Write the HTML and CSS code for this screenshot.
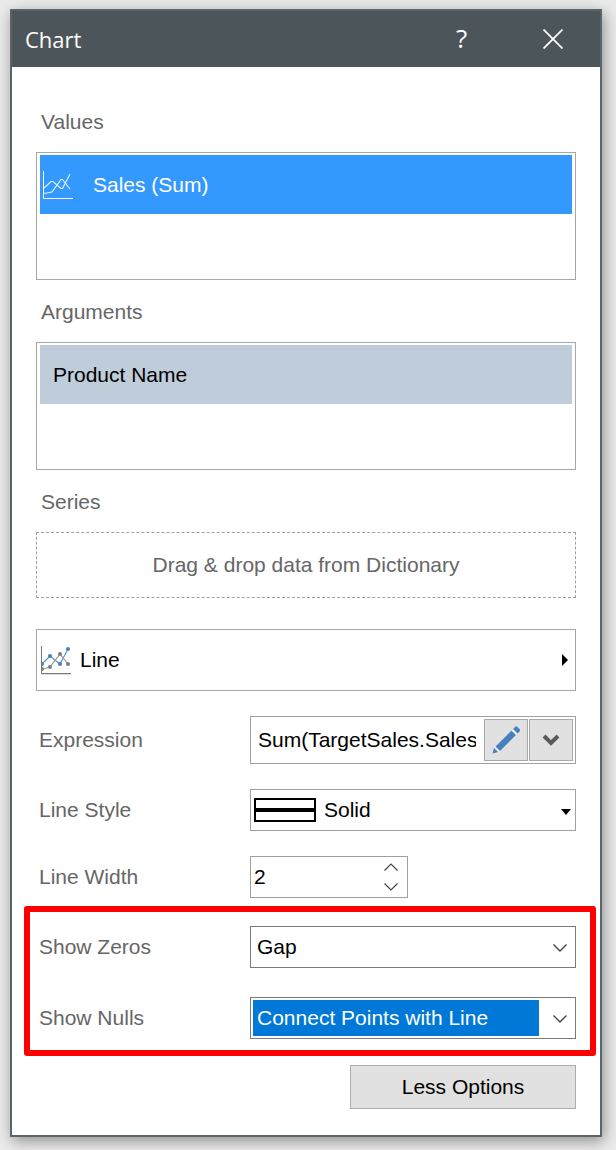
FILE: index.html
```html
<!DOCTYPE html>
<html lang="en">
<head>
<meta charset="utf-8">
<meta name="viewport" content="width=device-width, initial-scale=1">
<title>Chart</title>
<link rel="stylesheet" href="styles.css">
</head>
<body>
<main class="window">
  <header class="titlebar">
    <h1 class="title">Chart</h1>
    <button class="title-button title-help" type="button" aria-label="Help">?</button>
    <button class="title-button" type="button" aria-label="Close">
      <svg width="20" height="20" viewBox="0 0 20 20" fill="none" stroke="#fff" stroke-width="1.8"><path d="M.5 .5l19 19M19.500 .5l-19 19"/></svg>
    </button>
  </header>
  <form class="content">
    <h2 class="section-label">Values</h2>
    <div class="list">
      <button class="item item-active" type="button">
        <svg class="item-icon" width="31" height="30" viewBox="0 0 31 30" fill="none" stroke="#fff"><path d="M1.500 1v27.500H31"/><path stroke-width="1.200" stroke-opacity=".85" d="M2 18l7-6.500h2l8 7h1.500L28 4M2 23.500l8-1.500 9-12.500h1.500L28 19"/></svg>
        <span>Sales (Sum)</span>
      </button>
    </div>
    <h2 class="section-label">Arguments</h2>
    <div class="list">
      <button class="item item-muted" type="button">Product Name</button>
    </div>
    <h2 class="section-label">Series</h2>
    <div class="dropzone">Drag &amp; drop data from Dictionary</div>

    <button class="type-button" type="button">
      <svg width="32" height="31" viewBox="0 0 32 31" fill="none"><path stroke="#ddd" d="M1 29.500h29"/><path stroke="#777" d="M1.500 1v27.500H31"/><path stroke="#5d92c9" stroke-width="1.200" d="M2 19l8-8 10 8 8-15"/><path stroke="#999" stroke-width="1.200" d="M2 24.500l8-2.500 10-13 8 10"/><g fill="#4a80bd"><path d="M2 17a2 2 0 0 1 0 4z"/><circle cx="10" cy="11" r="2.100"/><circle cx="20" cy="19" r="2.100"/><circle cx="28" cy="4" r="2.100"/></g><g fill="#808080"><path d="M2 22a2 2 0 0 1 0 4z"/><circle cx="10" cy="22" r="2.100"/><circle cx="20" cy="9" r="2.100"/><circle cx="28" cy="19" r="2.100"/></g></svg>
      <span class="type-name">Line</span>
      <svg width="6" height="12" viewBox="0 0 6 12"><path d="M0 0l6 6-6 6z"/></svg>
    </button>

    <div class="row row-expression">
      <label for="expression">Expression</label>
      <div class="field field-expression">
        <input class="text-input" id="expression" type="text" value="Sum(TargetSales.Sales)">
        <button class="tool-button" type="button" aria-label="Edit expression">
          <svg width="30" height="30" viewBox="0 0 30 30"><path fill="#f4f7fa" d="M4 22L22 4l5 4L8 27z"/><path fill="#4a80bd" d="M1.500 28.500L3 23l4 4zM4.500 21.500L20.500 5.500l4.500 4.500L9 26zM22 4l2.500-2.500h1.500l3 3V6L26.500 8.500z"/></svg>
        </button>
        <button class="tool-button" type="button" aria-label="More">
          <svg width="18" height="12" viewBox="0 0 18 12" fill="none" stroke="#5a5a5a" stroke-width="4"><path d="M2 2l7 7 7-7"/></svg>
        </button>
      </div>
    </div>
    <div class="row row-style">
      <label for="line-style">Line Style</label>
      <div class="field">
        <svg class="swatch" width="62" height="24" viewBox="0 0 62 24"><path fill="none" stroke="#000" stroke-width="2" d="M1 1h60v22H1z"/><path d="M0 10h62v4H0z"/></svg>
        <select class="select select-style" id="line-style"><option>Solid</option></select>
        <svg class="arrow arrow-small" width="10" height="6" viewBox="0 0 10 6"><path d="M0 0h10L5 6z"/></svg>
      </div>
    </div>
    <div class="row row-width">
      <label for="line-width">Line Width</label>
      <div class="field field-number">
        <input class="number-input" id="line-width" type="number" value="2">
        <div class="spinner">
          <button type="button" aria-label="Increase"><svg width="14" height="8" viewBox="0 0 14 8" fill="none" stroke="#444" stroke-width="1.200"><path d="M.5 7.500L7 1l6.500 6.500"/></svg></button>
          <button type="button" aria-label="Decrease"><svg width="14" height="8" viewBox="0 0 14 8" fill="none" stroke="#444" stroke-width="1.200"><path d="M.5 .5L7 7l6.500-6.500"/></svg></button>
        </div>
      </div>
    </div>

    <div class="highlight">
      <div class="row">
        <label for="show-zeros">Show Zeros</label>
        <div class="field field-dark">
          <select class="select" id="show-zeros"><option>Gap</option></select>
          <svg class="arrow" width="14" height="8" viewBox="0 0 14 8" fill="none" stroke="#444" stroke-width="1.400"><path d="M.5 .5L7 7l6.500-6.500"/></svg>
        </div>
      </div>
      <div class="row">
        <label for="show-nulls">Show Nulls</label>
        <div class="field field-dark">
          <select class="select select-active" id="show-nulls"><option>Connect Points with Line</option></select>
          <svg class="arrow" width="14" height="8" viewBox="0 0 14 8" fill="none" stroke="#444" stroke-width="1.400"><path d="M.5 .5L7 7l6.500-6.500"/></svg>
        </div>
      </div>
    </div>
    <button class="options-button" type="button">Less Options</button>
  </form>
</main>
</body>
</html>
```
FILE: styles.css
```css
* { box-sizing: border-box; }

body {
  margin: 0;
  padding: 9px 14px 13px 10px;
  background: #ebebeb;
  color: #000;
  font: 21px/30px "Liberation Sans", Arial, sans-serif;
}

button, input, select {
  margin: 0;
  padding: 0;
  border: 0;
  border-radius: 0;
  background: none;
  color: inherit;
  font: inherit;
}

svg { display: block; flex: none; }

.window {
  border: 2px solid #5a646b;
  background: #fff;
  box-shadow: 2px 4px 14px rgba(0, 0, 0, 0.4);
}

.titlebar {
  display: flex;
  align-items: center;
  height: 56px;
  padding: 0 2px 0 13px;
  background: #4c555a;
  color: #fff;
  font-family: "Open Sans", "Noto Sans", sans-serif;
}

.title {
  flex: 1;
  margin: 0;
  font-size: 22px;
  font-weight: 400;
}

.title-button {
  display: flex;
  align-items: center;
  justify-content: center;
  width: 91px;
  height: 54px;
}

.title-help {
  padding-bottom: 3px;
  font-size: 26px;
  font-weight: 500;
}

.content {
  display: flex;
  flex-direction: column;
  padding: 40px 24px 26px;
}

.section-label {
  margin: 0 0 15px;
  padding-left: 5px;
  color: #666;
  font-size: 21px;
  font-weight: 400;
}

.list {
  height: 128px;
  margin-bottom: 17px;
  padding: 2px 3px;
  border: 1px solid #a6a6a6;
}

.item {
  display: flex;
  align-items: center;
  width: 100%;
  height: 59px;
}

.item-active {
  gap: 20px;
  padding-left: 2px;
  background: #3399ff;
  color: #fff;
}

.item-muted {
  padding-left: 13px;
  background: #bfccda;
}

.dropzone {
  display: flex;
  align-items: center;
  justify-content: center;
  height: 66px;
  border: 1px dashed #a0a0a0;
  color: #666;
}

.type-button {
  display: flex;
  align-items: center;
  gap: 8px;
  height: 62px;
  margin: 31px 0 25px;
  padding: 0 7px 0 3px;
  border: 1px solid #a6a6a6;
}

.type-name { flex: 1; text-align: left; }

.row {
  display: grid;
  grid-template-columns: 214px 1fr;
  align-items: center;
}

.row label { padding-left: 3px; color: #666; }

.row-style { margin: 25px 0; }

.row-width { margin-bottom: 8px; }

.field {
  position: relative;
  display: flex;
  align-items: center;
  min-width: 0;
  height: 42px;
  padding: 2px;
  border: 1px solid #a0a0a0;
}

.field-dark { border-color: #7a7a7a; }

.field-expression { height: 48px; gap: 1px; }

.text-input {
  flex: 1;
  min-width: 0;
  height: 30px;
  margin: 0 7px 0 5px;
}

.tool-button {
  display: flex;
  align-items: center;
  justify-content: center;
  width: 44px;
  height: 42px;
  border: 1px solid #a9a9a9;
  background: #e1e1e1;
}

.swatch { margin-left: 1px; }

.select {
  flex: 1;
  min-width: 0;
  height: 36px;
  padding-left: 4px;
  border-right: 34px solid transparent;
  appearance: none;
  background-clip: padding-box;
}

.select-style { padding-left: 8px; }

.select-active { background-color: #0078d7; color: #fff; }

.arrow {
  position: absolute;
  top: 17px;
  right: 8px;
  pointer-events: none;
}

.arrow-small { top: 19px; right: 4px; }

.field-number { width: 158px; padding-left: 3px; }

.number-input {
  flex: 1;
  min-width: 0;
  appearance: textfield;
}

.number-input::-webkit-inner-spin-button { appearance: none; margin: 0; }

.spinner { display: grid; gap: 4px; }

.spinner button {
  display: grid;
  place-items: center;
  width: 28px;
  height: 16px;
}

.highlight {
  display: grid;
  gap: 29px;
  margin: 0 -20px 9px -12px;
  padding: 14px 14px 11px 6px;
  border: 6px solid #f00;
  border-radius: 3px;
}

.options-button {
  align-self: flex-end;
  width: 226px;
  height: 44px;
  border: 1px solid #adadad;
  background: #e1e1e1;
}
```
